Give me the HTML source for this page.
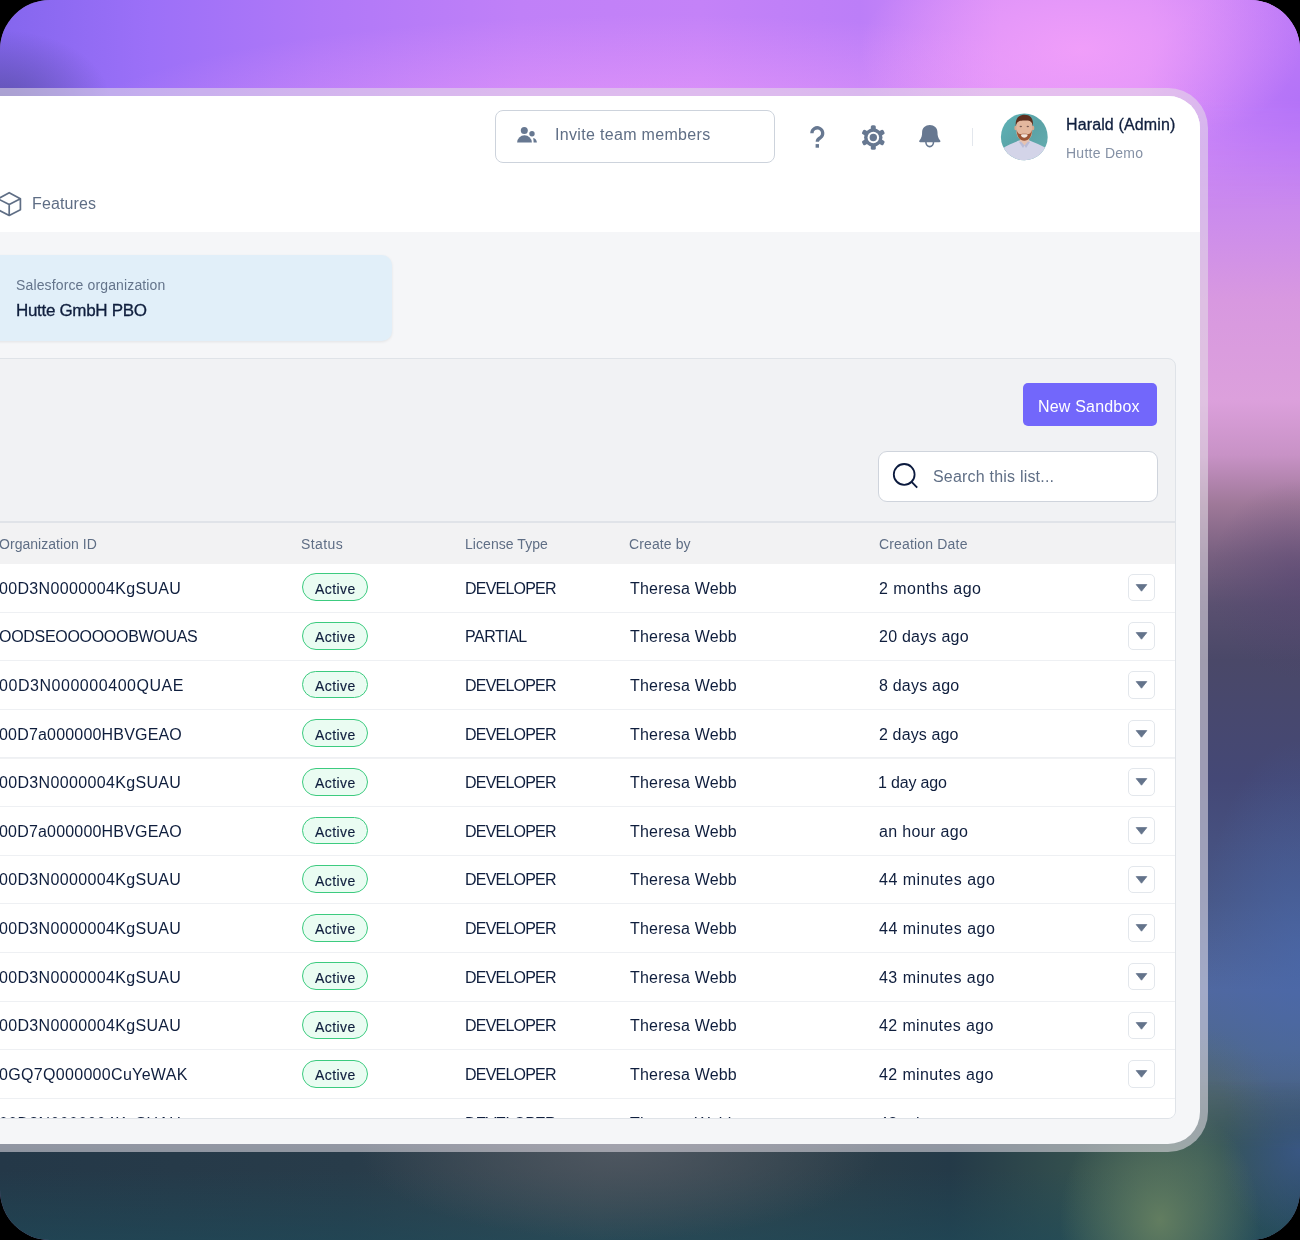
<!DOCTYPE html>
<html><head><meta charset="utf-8"><style>
*{box-sizing:border-box;margin:0;padding:0}
html,body{width:1300px;height:1240px;overflow:hidden;background:#000}
body{position:relative;font-family:"Liberation Sans",sans-serif;color:#0f1e3d}
.t{position:absolute;white-space:nowrap;will-change:transform}
.b{position:absolute}
#bg{position:absolute;left:0;top:0;width:1300px;height:1240px;border-radius:50px;overflow:hidden;background:#7a6aa0}
#bgr{position:absolute;left:1000px;top:0;width:300px;height:1240px;
background:linear-gradient(180deg,#c07cf8 0px,#c27ef6 120px,#cc8cec 220px,#d898e0 300px,#dca0dc 400px,#c892c6 455px,#9e7898 505px,#786080 555px,#5a5070 605px,#4a4868 660px,#444876 780px,#485888 900px,#5068a0 990px,#4e6890 1050px,#4a6078 1100px,#3c5264 1150px,#2c4858 1240px)}
#bgr2{position:absolute;left:1000px;top:0;width:300px;height:1240px;
background:radial-gradient(ellipse 90px 100px at 300px 580px, rgba(80,62,112,0.4), rgba(80,62,112,0)),
 radial-gradient(ellipse 100px 220px at 300px 960px, rgba(72,104,172,0.6), rgba(72,104,172,0)),
 radial-gradient(ellipse 70px 90px at 208px 1120px, rgba(88,108,100,0.6), rgba(88,108,100,0))}
#bgt{position:absolute;left:0;top:0;width:1300px;height:220px;
-webkit-mask-image:linear-gradient(180deg,#000 0px,#000 100px,transparent 210px);mask-image:linear-gradient(180deg,#000 0px,#000 100px,transparent 210px);
background:
 radial-gradient(ellipse 110px 70px at 0px 100px, rgba(92,80,172,0.9), rgba(92,80,172,0) 100%),
 radial-gradient(ellipse 220px 110px at 1080px 50px, rgba(244,160,250,0.85), rgba(244,160,250,0) 100%),
 radial-gradient(ellipse 160px 120px at 1300px 100px, rgba(176,112,248,0.8), rgba(176,112,248,0) 100%),
 radial-gradient(ellipse 600px 120px at 660px 135px, rgba(250,165,250,0.6), rgba(250,165,250,0) 100%),
 linear-gradient(90deg,#8466ee 0px,#9c70f8 150px,#b078f8 320px,#c080f8 520px,#c482f8 700px,#bc7ef8 860px,#d890f8 1000px,#d890f8 1150px,#c27ef8 1300px)}
#bgb{position:absolute;left:0;top:1080px;width:1300px;height:160px;
-webkit-mask-image:linear-gradient(180deg,transparent 0px,#000 70px);mask-image:linear-gradient(180deg,transparent 0px,#000 70px);
background:
 radial-gradient(ellipse 100px 120px at 1160px 140px, rgba(98,125,96,1), rgba(98,125,96,0) 100%),
 radial-gradient(ellipse 260px 90px at 620px 70px, rgba(80,88,98,0.9), rgba(80,88,98,0) 100%),
 radial-gradient(ellipse 80px 90px at 1300px 70px, rgba(60,90,140,0.8), rgba(60,90,140,0) 100%),
 linear-gradient(180deg, rgba(30,70,85,0) 90px, rgba(30,75,90,0.6) 160px),
 linear-gradient(90deg,#243848 0px,#283c4a 350px,#38464f 600px,#2e404a 780px,#243a48 950px,#34504e 1080px,#3a5a58 1200px,#2c4a5c 1300px)}
#frame{position:absolute;left:-40px;top:88px;width:1248px;height:1064px;border-radius:40px;background:rgba(226,222,230,0.56)}
#app{position:absolute;left:-40px;top:96px;width:1240px;height:1048px;border-radius:32px;background:#f5f6f8;overflow:hidden}
#c{position:absolute;left:40px;top:-96px;width:1300px;height:1240px}
</style></head>
<body>
<div id="bg"><div id="bgr"></div><div id="bgr2"></div><div id="bgt"></div><div id="bgb"></div></div>
<div id="frame"></div>
<div id="app"><div id="c">
<div class="b" style="left:0;top:96px;width:1200px;height:136px;background:#fff"></div>
<div class="b" style="left:495px;top:110px;width:280px;height:53px;border:1px solid #cdd3dc;border-radius:8px;background:#fff"></div>
<div class="t" id="t0" style="left:554.88px;top:127.06px;font-size:16px;line-height:16px;color:#5f6e85;font-weight:400;letter-spacing:0.320px;">Invite team members</div>
<div class="b" style="left:972px;top:128px;width:1px;height:18px;background:#e3e7ed"></div>
<svg class="b" style="left:1000px;top:113px" width="48" height="48" viewBox="0 0 48 48">
<defs><clipPath id="av"><circle cx="24.3" cy="23.9" r="23.4"/></clipPath>
<linearGradient id="tg" x1="0" y1="0" x2="1" y2="1"><stop offset="0" stop-color="#5fb4b8"/><stop offset="0.5" stop-color="#5aa2a6"/><stop offset="1" stop-color="#68b0b2"/></linearGradient></defs>
<g clip-path="url(#av)">
<rect width="48" height="48" fill="url(#tg)"/>
<path d="M0,48 L2,36 C7,32 13,30 19,27.5 L29.5,27.5 C35,30 41,32 46,35 L48,48Z" fill="#d3d4e8"/>
<path d="M20.5,24 L28.5,24 L29.5,28.5 L24.5,32.5 L19.5,28.5Z" fill="#e6c2b0"/>
<path d="M21,28.5 L24.5,32.5 L23,35 L19,29Z M28,28.5 L24.5,32.5 L26,35 L30,29Z" fill="#b9bbd6"/>
<ellipse cx="15.6" cy="15" rx="1.3" ry="2.3" fill="#d9a88e"/>
<ellipse cx="33" cy="15" rx="1.3" ry="2.3" fill="#d9a88e"/>
<path d="M16.2,12 C16.2,6.5 19.5,4.5 24.3,4.5 C29.1,4.5 32.4,6.5 32.4,12 L32.2,19 C31.8,24.5 28.5,27.5 24.3,27.5 C20.1,27.5 16.8,24.5 16.4,19Z" fill="#e3b79e"/>
<path d="M16.6,17 C17,24 20,27.8 24.3,27.8 C28.6,27.8 31.6,24 32,17 C31,20 29.5,21.5 28,21 C26.5,20.5 22,20.5 20.6,21 C19,21.5 17.6,20 16.6,17Z" fill="#9b5434"/>
<path d="M20.8,21.8 C22.5,21.2 26.3,21.2 27.8,21.8 C27.2,24 25.8,24.8 24.3,24.8 C22.8,24.8 21.4,24 20.8,21.8Z" fill="#f3e4dc"/>
<ellipse cx="20.8" cy="13.5" rx="1.2" ry="0.8" fill="#7a5a52"/>
<ellipse cx="27.8" cy="13.5" rx="1.2" ry="0.8" fill="#7a5a52"/>
<path d="M15.8,13 C15,6 18.5,1.8 24.5,1.8 C30.5,1.8 33.8,6 32.8,13 C32.2,9.5 30.5,7.8 28,7.6 C25,7.3 21,7.3 19.5,8 C17.5,8.8 16.3,10.5 15.8,13Z" fill="#5e2e1e"/>
</g></svg>
<div class="t" id="t1" style="left:1065.53px;top:117.46px;font-size:16px;line-height:16px;color:#0f1e3d;font-weight:400;letter-spacing:0.128px;-webkit-text-stroke:0.3px #0f1e3d">Harald (Admin)</div>
<div class="t" id="t2" style="left:1065.84px;top:146.35px;font-size:14px;line-height:14px;color:#8591a5;font-weight:400;letter-spacing:0.264px;">Hutte Demo</div>
<div class="t" id="t3" style="left:32.43px;top:195.96px;font-size:16px;line-height:16px;color:#5f6e85;font-weight:400;letter-spacing:0.114px;">Features</div>
<div class="b" style="left:-20px;top:255px;width:412px;height:86px;border-radius:10px;background:#e1eff9;box-shadow:0 1px 3px rgba(0,0,0,0.08)"></div>
<div class="t" id="t4" style="left:16.26px;top:277.95px;font-size:14px;line-height:14px;color:#64748b;font-weight:400;letter-spacing:0.135px;">Salesforce organization</div>
<div class="t" id="t5" style="left:16.27px;top:301.61px;font-size:17px;line-height:17px;color:#0f1e3d;font-weight:400;letter-spacing:-0.318px;-webkit-text-stroke:0.3px #0f1e3d">Hutte GmbH PBO</div>
<div class="b" style="left:-20px;top:358px;width:1196px;height:761px;border:1px solid #dfe3e8;border-radius:8px;background:#f1f2f4;overflow:hidden">
<div class="b" style="left:19px;top:-359px;width:1300px;height:1240px">
<div class="b" style="left:1023px;top:383px;width:134px;height:43px;border-radius:5px;background:#7267fb"></div>
<div class="t" id="t6" style="left:1037.61px;top:398.86px;font-size:16px;line-height:16px;color:#ffffff;font-weight:400;letter-spacing:0.192px;">New Sandbox</div>
<div class="b" style="left:877.5px;top:451px;width:280px;height:51px;border:1px solid #cfd4dc;border-radius:9px;background:#fff"></div>
<div class="t" id="t7" style="left:932.55px;top:468.66px;font-size:16px;line-height:16px;color:#5f6e85;font-weight:400;letter-spacing:0.201px;">Search this list...</div>
<div class="b" style="left:0;top:521px;width:1200px;height:2px;background:#e0e3e8"></div>
<div class="b" style="left:0;top:523px;width:1200px;height:41px;background:#f2f2f3"></div>
<div class="t" id="t8" style="left:-1.00px;top:537.25px;font-size:14px;line-height:14px;color:#5f6e85;font-weight:400;letter-spacing:0.039px;">Organization ID</div>
<div class="t" id="t9" style="left:301.30px;top:537.25px;font-size:14px;line-height:14px;color:#5f6e85;font-weight:400;letter-spacing:0.398px;">Status</div>
<div class="t" id="t10" style="left:464.57px;top:537.25px;font-size:14px;line-height:14px;color:#5f6e85;font-weight:400;letter-spacing:0.057px;">License Type</div>
<div class="t" id="t11" style="left:628.71px;top:537.25px;font-size:14px;line-height:14px;color:#5f6e85;font-weight:400;letter-spacing:0.112px;">Create by</div>
<div class="t" id="t12" style="left:878.81px;top:537.25px;font-size:14px;line-height:14px;color:#5f6e85;font-weight:400;letter-spacing:0.170px;">Creation Date</div>
<div class="b" style="left:0;top:563.95px;width:1200px;height:48.64px;background:#fff;border-bottom:1px solid #eef0f3"></div>
<div class="t" id="t13" style="left:-0.96px;top:580.61px;font-size:16px;line-height:16px;color:#0f1e3d;font-weight:400;letter-spacing:0.341px;">00D3N0000004KgSUAU</div>
<div class="b" style="left:302.3px;top:573.35px;width:65.8px;height:27.8px;border:1.6px solid #3ccb7f;border-radius:14px;background:#eafcf2"></div>
<div class="t" id="t14" style="left:315.27px;top:581.80px;font-size:14px;line-height:14px;color:#0f1e3d;font-weight:400;letter-spacing:0.429px;-webkit-text-stroke:0.15px #0f1e3d">Active</div>
<div class="t" id="t15" style="left:464.59px;top:580.61px;font-size:16px;line-height:16px;color:#0f1e3d;font-weight:400;letter-spacing:-0.794px;">DEVELOPER</div>
<div class="t" id="t16" style="left:629.65px;top:580.61px;font-size:16px;line-height:16px;color:#0f1e3d;font-weight:400;letter-spacing:0.186px;">Theresa Webb</div>
<div class="t" id="t17" style="left:878.57px;top:580.61px;font-size:16px;line-height:16px;color:#0f1e3d;font-weight:400;letter-spacing:0.457px;">2 months ago</div>
<div class="b" style="left:1127.5px;top:573.75px;width:27px;height:27.5px;border:1px solid #e3e7ec;border-radius:5px;background:#fff"></div>
<svg class="b" style="left:1135px;top:583.75px" width="13" height="8" viewBox="0 0 13 8"><path d="M1.2,0.6 L11.8,0.6 L6.5,7.2Z" fill="#64748b" stroke="#64748b" stroke-width="0.8" stroke-linejoin="round"/></svg>
<div class="b" style="left:0;top:612.59px;width:1200px;height:48.64px;background:#fff;border-bottom:1px solid #eef0f3"></div>
<div class="t" id="t18" style="left:-1.05px;top:629.25px;font-size:16px;line-height:16px;color:#0f1e3d;font-weight:400;letter-spacing:-0.303px;">OODSEOOOOOOBWOUAS</div>
<div class="b" style="left:302.3px;top:621.99px;width:65.8px;height:27.8px;border:1.6px solid #3ccb7f;border-radius:14px;background:#eafcf2"></div>
<div class="t" id="t19" style="left:315.27px;top:630.44px;font-size:14px;line-height:14px;color:#0f1e3d;font-weight:400;letter-spacing:0.429px;-webkit-text-stroke:0.15px #0f1e3d">Active</div>
<div class="t" id="t20" style="left:464.59px;top:629.25px;font-size:16px;line-height:16px;color:#0f1e3d;font-weight:400;letter-spacing:-0.498px;">PARTIAL</div>
<div class="t" id="t21" style="left:629.65px;top:629.25px;font-size:16px;line-height:16px;color:#0f1e3d;font-weight:400;letter-spacing:0.186px;">Theresa Webb</div>
<div class="t" id="t22" style="left:878.57px;top:629.25px;font-size:16px;line-height:16px;color:#0f1e3d;font-weight:400;letter-spacing:0.237px;">20 days ago</div>
<div class="b" style="left:1127.5px;top:622.39px;width:27px;height:27.5px;border:1px solid #e3e7ec;border-radius:5px;background:#fff"></div>
<svg class="b" style="left:1135px;top:632.39px" width="13" height="8" viewBox="0 0 13 8"><path d="M1.2,0.6 L11.8,0.6 L6.5,7.2Z" fill="#64748b" stroke="#64748b" stroke-width="0.8" stroke-linejoin="round"/></svg>
<div class="b" style="left:0;top:661.23px;width:1200px;height:48.64px;background:#fff;border-bottom:1px solid #eef0f3"></div>
<div class="t" id="t23" style="left:-0.96px;top:677.89px;font-size:16px;line-height:16px;color:#0f1e3d;font-weight:400;letter-spacing:0.545px;">00D3N000000400QUAE</div>
<div class="b" style="left:302.3px;top:670.63px;width:65.8px;height:27.8px;border:1.6px solid #3ccb7f;border-radius:14px;background:#eafcf2"></div>
<div class="t" id="t24" style="left:315.27px;top:679.08px;font-size:14px;line-height:14px;color:#0f1e3d;font-weight:400;letter-spacing:0.429px;-webkit-text-stroke:0.15px #0f1e3d">Active</div>
<div class="t" id="t25" style="left:464.59px;top:677.89px;font-size:16px;line-height:16px;color:#0f1e3d;font-weight:400;letter-spacing:-0.794px;">DEVELOPER</div>
<div class="t" id="t26" style="left:629.65px;top:677.89px;font-size:16px;line-height:16px;color:#0f1e3d;font-weight:400;letter-spacing:0.186px;">Theresa Webb</div>
<div class="t" id="t27" style="left:878.84px;top:677.89px;font-size:16px;line-height:16px;color:#0f1e3d;font-weight:400;letter-spacing:0.210px;">8 days ago</div>
<div class="b" style="left:1127.5px;top:671.03px;width:27px;height:27.5px;border:1px solid #e3e7ec;border-radius:5px;background:#fff"></div>
<svg class="b" style="left:1135px;top:681.03px" width="13" height="8" viewBox="0 0 13 8"><path d="M1.2,0.6 L11.8,0.6 L6.5,7.2Z" fill="#64748b" stroke="#64748b" stroke-width="0.8" stroke-linejoin="round"/></svg>
<div class="b" style="left:0;top:709.87px;width:1200px;height:48.64px;background:#fff;border-bottom:1px solid #eef0f3"></div>
<div class="t" id="t28" style="left:-0.96px;top:726.53px;font-size:16px;line-height:16px;color:#0f1e3d;font-weight:400;letter-spacing:0.183px;">00D7a000000HBVGEAO</div>
<div class="b" style="left:302.3px;top:719.27px;width:65.8px;height:27.8px;border:1.6px solid #3ccb7f;border-radius:14px;background:#eafcf2"></div>
<div class="t" id="t29" style="left:315.27px;top:727.72px;font-size:14px;line-height:14px;color:#0f1e3d;font-weight:400;letter-spacing:0.429px;-webkit-text-stroke:0.15px #0f1e3d">Active</div>
<div class="t" id="t30" style="left:464.59px;top:726.53px;font-size:16px;line-height:16px;color:#0f1e3d;font-weight:400;letter-spacing:-0.794px;">DEVELOPER</div>
<div class="t" id="t31" style="left:629.65px;top:726.53px;font-size:16px;line-height:16px;color:#0f1e3d;font-weight:400;letter-spacing:0.186px;">Theresa Webb</div>
<div class="t" id="t32" style="left:878.57px;top:726.53px;font-size:16px;line-height:16px;color:#0f1e3d;font-weight:400;letter-spacing:0.131px;">2 days ago</div>
<div class="b" style="left:1127.5px;top:719.67px;width:27px;height:27.5px;border:1px solid #e3e7ec;border-radius:5px;background:#fff"></div>
<svg class="b" style="left:1135px;top:729.67px" width="13" height="8" viewBox="0 0 13 8"><path d="M1.2,0.6 L11.8,0.6 L6.5,7.2Z" fill="#64748b" stroke="#64748b" stroke-width="0.8" stroke-linejoin="round"/></svg>
<div class="b" style="left:0;top:758.51px;width:1200px;height:48.64px;background:#fff;border-bottom:1px solid #eef0f3"></div>
<div class="t" id="t33" style="left:-0.96px;top:775.17px;font-size:16px;line-height:16px;color:#0f1e3d;font-weight:400;letter-spacing:0.341px;">00D3N0000004KgSUAU</div>
<div class="b" style="left:302.3px;top:767.91px;width:65.8px;height:27.8px;border:1.6px solid #3ccb7f;border-radius:14px;background:#eafcf2"></div>
<div class="t" id="t34" style="left:315.27px;top:776.36px;font-size:14px;line-height:14px;color:#0f1e3d;font-weight:400;letter-spacing:0.429px;-webkit-text-stroke:0.15px #0f1e3d">Active</div>
<div class="t" id="t35" style="left:464.59px;top:775.17px;font-size:16px;line-height:16px;color:#0f1e3d;font-weight:400;letter-spacing:-0.794px;">DEVELOPER</div>
<div class="t" id="t36" style="left:629.65px;top:775.17px;font-size:16px;line-height:16px;color:#0f1e3d;font-weight:400;letter-spacing:0.186px;">Theresa Webb</div>
<div class="t" id="t37" style="left:878.10px;top:775.17px;font-size:16px;line-height:16px;color:#0f1e3d;font-weight:400;letter-spacing:-0.165px;">1 day ago</div>
<div class="b" style="left:1127.5px;top:768.31px;width:27px;height:27.5px;border:1px solid #e3e7ec;border-radius:5px;background:#fff"></div>
<svg class="b" style="left:1135px;top:778.31px" width="13" height="8" viewBox="0 0 13 8"><path d="M1.2,0.6 L11.8,0.6 L6.5,7.2Z" fill="#64748b" stroke="#64748b" stroke-width="0.8" stroke-linejoin="round"/></svg>
<div class="b" style="left:0;top:807.15px;width:1200px;height:48.64px;background:#fff;border-bottom:1px solid #eef0f3"></div>
<div class="t" id="t38" style="left:-0.96px;top:823.81px;font-size:16px;line-height:16px;color:#0f1e3d;font-weight:400;letter-spacing:0.183px;">00D7a000000HBVGEAO</div>
<div class="b" style="left:302.3px;top:816.55px;width:65.8px;height:27.8px;border:1.6px solid #3ccb7f;border-radius:14px;background:#eafcf2"></div>
<div class="t" id="t39" style="left:315.27px;top:825.00px;font-size:14px;line-height:14px;color:#0f1e3d;font-weight:400;letter-spacing:0.429px;-webkit-text-stroke:0.15px #0f1e3d">Active</div>
<div class="t" id="t40" style="left:464.59px;top:823.81px;font-size:16px;line-height:16px;color:#0f1e3d;font-weight:400;letter-spacing:-0.794px;">DEVELOPER</div>
<div class="t" id="t41" style="left:629.65px;top:823.81px;font-size:16px;line-height:16px;color:#0f1e3d;font-weight:400;letter-spacing:0.186px;">Theresa Webb</div>
<div class="t" id="t42" style="left:878.95px;top:823.81px;font-size:16px;line-height:16px;color:#0f1e3d;font-weight:400;letter-spacing:0.356px;">an hour ago</div>
<div class="b" style="left:1127.5px;top:816.95px;width:27px;height:27.5px;border:1px solid #e3e7ec;border-radius:5px;background:#fff"></div>
<svg class="b" style="left:1135px;top:826.95px" width="13" height="8" viewBox="0 0 13 8"><path d="M1.2,0.6 L11.8,0.6 L6.5,7.2Z" fill="#64748b" stroke="#64748b" stroke-width="0.8" stroke-linejoin="round"/></svg>
<div class="b" style="left:0;top:855.79px;width:1200px;height:48.64px;background:#fff;border-bottom:1px solid #eef0f3"></div>
<div class="t" id="t43" style="left:-0.96px;top:872.45px;font-size:16px;line-height:16px;color:#0f1e3d;font-weight:400;letter-spacing:0.341px;">00D3N0000004KgSUAU</div>
<div class="b" style="left:302.3px;top:865.19px;width:65.8px;height:27.8px;border:1.6px solid #3ccb7f;border-radius:14px;background:#eafcf2"></div>
<div class="t" id="t44" style="left:315.27px;top:873.64px;font-size:14px;line-height:14px;color:#0f1e3d;font-weight:400;letter-spacing:0.429px;-webkit-text-stroke:0.15px #0f1e3d">Active</div>
<div class="t" id="t45" style="left:464.59px;top:872.45px;font-size:16px;line-height:16px;color:#0f1e3d;font-weight:400;letter-spacing:-0.794px;">DEVELOPER</div>
<div class="t" id="t46" style="left:629.65px;top:872.45px;font-size:16px;line-height:16px;color:#0f1e3d;font-weight:400;letter-spacing:0.186px;">Theresa Webb</div>
<div class="t" id="t47" style="left:879.47px;top:872.45px;font-size:16px;line-height:16px;color:#0f1e3d;font-weight:400;letter-spacing:0.500px;">44 minutes ago</div>
<div class="b" style="left:1127.5px;top:865.59px;width:27px;height:27.5px;border:1px solid #e3e7ec;border-radius:5px;background:#fff"></div>
<svg class="b" style="left:1135px;top:875.59px" width="13" height="8" viewBox="0 0 13 8"><path d="M1.2,0.6 L11.8,0.6 L6.5,7.2Z" fill="#64748b" stroke="#64748b" stroke-width="0.8" stroke-linejoin="round"/></svg>
<div class="b" style="left:0;top:904.43px;width:1200px;height:48.64px;background:#fff;border-bottom:1px solid #eef0f3"></div>
<div class="t" id="t48" style="left:-0.96px;top:921.09px;font-size:16px;line-height:16px;color:#0f1e3d;font-weight:400;letter-spacing:0.341px;">00D3N0000004KgSUAU</div>
<div class="b" style="left:302.3px;top:913.83px;width:65.8px;height:27.8px;border:1.6px solid #3ccb7f;border-radius:14px;background:#eafcf2"></div>
<div class="t" id="t49" style="left:315.27px;top:922.28px;font-size:14px;line-height:14px;color:#0f1e3d;font-weight:400;letter-spacing:0.429px;-webkit-text-stroke:0.15px #0f1e3d">Active</div>
<div class="t" id="t50" style="left:464.59px;top:921.09px;font-size:16px;line-height:16px;color:#0f1e3d;font-weight:400;letter-spacing:-0.794px;">DEVELOPER</div>
<div class="t" id="t51" style="left:629.65px;top:921.09px;font-size:16px;line-height:16px;color:#0f1e3d;font-weight:400;letter-spacing:0.186px;">Theresa Webb</div>
<div class="t" id="t52" style="left:879.47px;top:921.09px;font-size:16px;line-height:16px;color:#0f1e3d;font-weight:400;letter-spacing:0.500px;">44 minutes ago</div>
<div class="b" style="left:1127.5px;top:914.23px;width:27px;height:27.5px;border:1px solid #e3e7ec;border-radius:5px;background:#fff"></div>
<svg class="b" style="left:1135px;top:924.23px" width="13" height="8" viewBox="0 0 13 8"><path d="M1.2,0.6 L11.8,0.6 L6.5,7.2Z" fill="#64748b" stroke="#64748b" stroke-width="0.8" stroke-linejoin="round"/></svg>
<div class="b" style="left:0;top:953.07px;width:1200px;height:48.64px;background:#fff;border-bottom:1px solid #eef0f3"></div>
<div class="t" id="t53" style="left:-0.96px;top:969.73px;font-size:16px;line-height:16px;color:#0f1e3d;font-weight:400;letter-spacing:0.341px;">00D3N0000004KgSUAU</div>
<div class="b" style="left:302.3px;top:962.47px;width:65.8px;height:27.8px;border:1.6px solid #3ccb7f;border-radius:14px;background:#eafcf2"></div>
<div class="t" id="t54" style="left:315.27px;top:970.92px;font-size:14px;line-height:14px;color:#0f1e3d;font-weight:400;letter-spacing:0.429px;-webkit-text-stroke:0.15px #0f1e3d">Active</div>
<div class="t" id="t55" style="left:464.59px;top:969.73px;font-size:16px;line-height:16px;color:#0f1e3d;font-weight:400;letter-spacing:-0.794px;">DEVELOPER</div>
<div class="t" id="t56" style="left:629.65px;top:969.73px;font-size:16px;line-height:16px;color:#0f1e3d;font-weight:400;letter-spacing:0.186px;">Theresa Webb</div>
<div class="t" id="t57" style="left:879.47px;top:969.73px;font-size:16px;line-height:16px;color:#0f1e3d;font-weight:400;letter-spacing:0.464px;">43 minutes ago</div>
<div class="b" style="left:1127.5px;top:962.87px;width:27px;height:27.5px;border:1px solid #e3e7ec;border-radius:5px;background:#fff"></div>
<svg class="b" style="left:1135px;top:972.87px" width="13" height="8" viewBox="0 0 13 8"><path d="M1.2,0.6 L11.8,0.6 L6.5,7.2Z" fill="#64748b" stroke="#64748b" stroke-width="0.8" stroke-linejoin="round"/></svg>
<div class="b" style="left:0;top:1001.71px;width:1200px;height:48.64px;background:#fff;border-bottom:1px solid #eef0f3"></div>
<div class="t" id="t58" style="left:-0.96px;top:1018.37px;font-size:16px;line-height:16px;color:#0f1e3d;font-weight:400;letter-spacing:0.341px;">00D3N0000004KgSUAU</div>
<div class="b" style="left:302.3px;top:1011.11px;width:65.8px;height:27.8px;border:1.6px solid #3ccb7f;border-radius:14px;background:#eafcf2"></div>
<div class="t" id="t59" style="left:315.27px;top:1019.56px;font-size:14px;line-height:14px;color:#0f1e3d;font-weight:400;letter-spacing:0.429px;-webkit-text-stroke:0.15px #0f1e3d">Active</div>
<div class="t" id="t60" style="left:464.59px;top:1018.37px;font-size:16px;line-height:16px;color:#0f1e3d;font-weight:400;letter-spacing:-0.794px;">DEVELOPER</div>
<div class="t" id="t61" style="left:629.65px;top:1018.37px;font-size:16px;line-height:16px;color:#0f1e3d;font-weight:400;letter-spacing:0.186px;">Theresa Webb</div>
<div class="t" id="t62" style="left:879.47px;top:1018.37px;font-size:16px;line-height:16px;color:#0f1e3d;font-weight:400;letter-spacing:0.380px;">42 minutes ago</div>
<div class="b" style="left:1127.5px;top:1011.51px;width:27px;height:27.5px;border:1px solid #e3e7ec;border-radius:5px;background:#fff"></div>
<svg class="b" style="left:1135px;top:1021.51px" width="13" height="8" viewBox="0 0 13 8"><path d="M1.2,0.6 L11.8,0.6 L6.5,7.2Z" fill="#64748b" stroke="#64748b" stroke-width="0.8" stroke-linejoin="round"/></svg>
<div class="b" style="left:0;top:1050.35px;width:1200px;height:48.64px;background:#fff;border-bottom:1px solid #eef0f3"></div>
<div class="t" id="t63" style="left:-0.96px;top:1067.01px;font-size:16px;line-height:16px;color:#0f1e3d;font-weight:400;letter-spacing:0.319px;">0GQ7Q000000CuYeWAK</div>
<div class="b" style="left:302.3px;top:1059.75px;width:65.8px;height:27.8px;border:1.6px solid #3ccb7f;border-radius:14px;background:#eafcf2"></div>
<div class="t" id="t64" style="left:315.27px;top:1068.20px;font-size:14px;line-height:14px;color:#0f1e3d;font-weight:400;letter-spacing:0.429px;-webkit-text-stroke:0.15px #0f1e3d">Active</div>
<div class="t" id="t65" style="left:464.59px;top:1067.01px;font-size:16px;line-height:16px;color:#0f1e3d;font-weight:400;letter-spacing:-0.794px;">DEVELOPER</div>
<div class="t" id="t66" style="left:629.65px;top:1067.01px;font-size:16px;line-height:16px;color:#0f1e3d;font-weight:400;letter-spacing:0.186px;">Theresa Webb</div>
<div class="t" id="t67" style="left:879.47px;top:1067.01px;font-size:16px;line-height:16px;color:#0f1e3d;font-weight:400;letter-spacing:0.380px;">42 minutes ago</div>
<div class="b" style="left:1127.5px;top:1060.15px;width:27px;height:27.5px;border:1px solid #e3e7ec;border-radius:5px;background:#fff"></div>
<svg class="b" style="left:1135px;top:1070.15px" width="13" height="8" viewBox="0 0 13 8"><path d="M1.2,0.6 L11.8,0.6 L6.5,7.2Z" fill="#64748b" stroke="#64748b" stroke-width="0.8" stroke-linejoin="round"/></svg>
<div class="b" style="left:0;top:1098.99px;width:1200px;height:48.64px;background:#fff;border-bottom:1px solid #eef0f3"></div>
<div class="t" id="t68" style="left:-0.96px;top:1115.65px;font-size:16px;line-height:16px;color:#0f1e3d;font-weight:400;letter-spacing:0.341px;">00D3N0000004KgSUAU</div>
<div class="t" id="t69" style="left:464.59px;top:1115.65px;font-size:16px;line-height:16px;color:#0f1e3d;font-weight:400;letter-spacing:-0.794px;">DEVELOPER</div>
<div class="t" id="t70" style="left:629.65px;top:1115.65px;font-size:16px;line-height:16px;color:#0f1e3d;font-weight:400;letter-spacing:0.186px;">Theresa Webb</div>
<div class="t" id="t71" style="left:879.47px;top:1115.65px;font-size:16px;line-height:16px;color:#0f1e3d;font-weight:400;letter-spacing:0.380px;">42 minutes ago</div>
</div></div>

</div></div>
<svg class="b" style="left:0;top:0;pointer-events:none" width="1300" height="1240" viewBox="0 0 1300 1240">
<g fill="#677891">
 <circle cx="524.3" cy="130.5" r="3.5"/>
 <path d="M517.1,142.5 A7.4,7.2 0 0 1 531.9,142.5Z"/>
 <circle cx="532" cy="133.8" r="2.7"/>
 <path d="M533.2,137.9 C535.3,138.3 536.9,140.3 536.9,142.5 L533.6,142.5 C533.6,141 533.4,139.4 533.2,137.9Z"/>
</g>
<g fill="none" stroke="#677891" stroke-width="3.3">
 <path d="M811.9,133.3 A5.4,5.4 0 1 1 820.6,137.5 C818.6,138.6 817.3,139.6 817.3,141.8"/>
</g>
<rect x="815.6" y="144.1" width="3.4" height="3.6" fill="#677891"/>
<g fill="#677891"><rect x="870.8" y="125.2" width="5" height="8" rx="1.6" transform="rotate(0 873.3 137.5)"/><rect x="870.8" y="125.2" width="5" height="8" rx="1.6" transform="rotate(60 873.3 137.5)"/><rect x="870.8" y="125.2" width="5" height="8" rx="1.6" transform="rotate(120 873.3 137.5)"/><rect x="870.8" y="125.2" width="5" height="8" rx="1.6" transform="rotate(180 873.3 137.5)"/><rect x="870.8" y="125.2" width="5" height="8" rx="1.6" transform="rotate(240 873.3 137.5)"/><rect x="870.8" y="125.2" width="5" height="8" rx="1.6" transform="rotate(300 873.3 137.5)"/><circle cx="873.3" cy="137.5" r="9.2"/></g>
<circle cx="873.3" cy="137.5" r="5.8" fill="#fff"/>
<circle cx="873.3" cy="137.5" r="3.7" fill="#677891"/>
<path d="M919.3,140.8 C921.6,138.3 922.1,135.5 922.1,132.5 C922.1,128 925.5,125.1 929.8,125.1 C934.1,125.1 937.5,128 937.5,132.5 C937.5,135.5 938,138.3 940.3,140.8 C940.7,141.4 940.3,142.2 939.4,142.2 L920.2,142.2 C919.3,142.2 918.9,141.4 919.3,140.8Z" fill="#677891"/>
<path d="M925.9,142 A3.8,4.6 0 0 0 933.5,142" fill="none" stroke="#677891" stroke-width="1.6"/>
<path d="M9.2,192.7 L20.4,198.8 L20.4,209.8 L9.2,215.4 L-2,209.8 L-2,198.8Z M-2,198.8 L9.2,204.6 L20.4,198.8 M9.2,204.6 L9.2,215.4" fill="none" stroke="#5f6e85" stroke-width="1.7" stroke-linejoin="round"/>
<circle cx="904.2" cy="474.4" r="10.4" fill="none" stroke="#0b1a3e" stroke-width="1.8"/>
<path d="M911.6,481.8 L917.2,487.6" stroke="#0b1a3e" stroke-width="1.9"/>
</svg>

</body></html>
